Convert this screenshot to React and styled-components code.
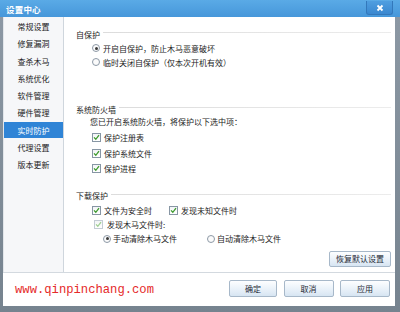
import React from "react"
import styled, { createGlobalStyle } from "styled-components"

const Global = createGlobalStyle`
  html, body {
    margin: 0;
    padding: 0;
    background: #7f8c98;
  }
  body {
    font-family: "Noto Sans CJK SC", "Noto Sans", sans-serif;
    font-size: 8px;
    color: #1c1c1c;
  }
`

const Window = styled.div`
  width: 400px;
  height: 312px;
  display: flex;
  flex-direction: column;
  background: linear-gradient(#8d99a5, #76838f);
`

const TitleBar = styled.div`
  height: 17px;
  flex: none;
  display: flex;
  align-items: flex-start;
  justify-content: space-between;
  background: linear-gradient(#5aaae6, #4697da);
`

const Title = styled.div`
  padding: 3px 0 0 6px;
  color: #fff;
  font-size: 8.5px;
  font-weight: bold;
  line-height: 12px;
  letter-spacing: 0.2px;
`

const Close = styled.div`
  width: 25px;
  height: 13px;
  margin: 1px 7px 0 0;
  display: flex;
  align-items: center;
  justify-content: center;
  background: linear-gradient(#4f9ee0, #3a88d0);
  border: 1px solid #3378bb;
  border-top: none;
  border-radius: 0 0 3px 3px;
`

const Body = styled.div`
  flex: 1;
  margin: 0 5px 6px 3px;
  background: #fff;
  display: flex;
  flex-direction: column;
`

const Main = styled.div`
  height: 255px;
  flex: none;
  display: flex;
  border-bottom: 1px solid #d3d9df;
`

const Sidebar = styled.div`
  width: 59px;
  flex: none;
  padding-top: 1.4px;
  background: #f6f7f9;
  border-right: 1px solid #cfd6dd;
  border-left: 1px solid #e2e6ea;
`

const NavItem = styled.div`
  height: 16.5px;
  margin-bottom: 0.75px;
  display: flex;
  align-items: center;
  justify-content: center;
  color: ${p => (p.$active ? "#fff" : "#222")};
  background: ${p => (p.$active ? "#2f84d6" : "transparent")};
`

const Panel = styled.div`
  flex: 1;
  padding: 11px 4px 0 12px;
  display: flex;
  flex-direction: column;
`

const SectionHead = styled.div`
  height: 12px;
  margin-top: ${p => p.$top || 0}px;
  display: flex;
  align-items: center;
  gap: 3px;
  &::after {
    content: "";
    flex: 1;
    height: 1px;
    margin-top: -3px;
    background: linear-gradient(to right, #dcdcdc, #ececec);
  }
`

const Row = styled.div`
  height: ${p => p.$h || 14}px;
  margin-top: ${p => p.$top || 0}px;
  padding-left: ${p => p.$indent || 16}px;
  display: flex;
  align-items: center;
`

const Item = styled.div`
  width: ${p => (p.$w ? p.$w + "px" : "auto")};
  display: flex;
  align-items: center;
  gap: ${p => p.$gap || 3}px;
`

const Box = styled.span`
  width: 7px;
  height: 7px;
  flex: none;
  display: flex;
  align-items: center;
  justify-content: center;
  border: 1px solid ${p => (p.$dim ? "#c3ccd4" : "#8796a4")};
  background: linear-gradient(#f2f4f6, #fff);
`

const Radio = styled.span`
  width: 6px;
  height: 6px;
  flex: none;
  border-radius: 50%;
  border: 1px solid #8d99a6;
  background: #fbfbfb;
  display: flex;
  align-items: center;
  justify-content: center;
  &::after {
    content: "";
    width: 3px;
    height: 3px;
    border-radius: 50%;
    background: ${p => (p.$on ? "#3a3a3a" : "transparent")};
  }
`

const Button = styled.div`
  width: ${p => p.$w || 48}px;
  height: ${p => p.$h || 17}px;
  display: flex;
  align-items: center;
  justify-content: center;
  box-sizing: border-box;
  border: 1px solid #a7b8c9;
  border-radius: 2px;
  background: linear-gradient(#fdfeff, #e9f1f9 55%, #d7e5f2);
  color: #1e2a36;
`

const Restore = styled.div`
  margin-top: 5px;
  display: flex;
  justify-content: flex-end;
`

const Footer = styled.div`
  flex: 1;
  display: flex;
  align-items: center;
  justify-content: space-between;
  padding: 0 5px 2px 12px;
`

const Watermark = styled.div`
  font-family: "Liberation Mono", monospace;
  font-size: 12.2px;
  color: #e52a2a;
  margin-top: 2px;
`

const Buttons = styled.div`
  display: flex;
  gap: 6.5px;
`

const Check = ({ dim }) => (
  <Box $dim={dim}>
    <svg width="7" height="7" viewBox="0 0 7 7">
      <path d="M1 3.4 L2.8 5.3 L6 1.2" fill="none" stroke={dim ? "#9fcf92" : "#3c9a2c"} strokeWidth="1.3" />
    </svg>
  </Box>
)

const nav = ["常规设置", "修复漏洞", "查杀木马", "系统优化", "软件管理", "硬件管理", "实时防护", "代理设置", "版本更新"]

export default function App() {
  return (
    <>
      <Global />
      <Window>
        <TitleBar>
          <Title>设置中心</Title>
          <Close>
            <svg width="8" height="8" viewBox="0 0 8 8">
              <path d="M1.5 1.5 L6.5 6.5 M6.5 1.5 L1.5 6.5" stroke="#fff" strokeWidth="1.8" />
            </svg>
          </Close>
        </TitleBar>
        <Body>
          <Main>
            <Sidebar>
              {nav.map(n => (
                <NavItem key={n} $active={n === "实时防护"}>{n}</NavItem>
              ))}
            </Sidebar>
            <Panel>
              <SectionHead>自保护</SectionHead>
              <Row $top={1}>
                <Item><Radio $on />开启自保护，防止木马恶意破坏</Item>
              </Row>
              <Row>
                <Item><Radio />临时关闭自保护（仅本次开机有效）</Item>
              </Row>

              <SectionHead $top={34}>系统防火墙</SectionHead>
              <Row $h={12} $indent={14}>您已开启系统防火墙，将保护以下选中项：</Row>
              <Row $h={15.5} $top={3}>
                <Item><Check />保护注册表</Item>
              </Row>
              <Row $h={15.5}>
                <Item><Check />保护系统文件</Item>
              </Row>
              <Row $h={15.5}>
                <Item><Check />保护进程</Item>
              </Row>

              <SectionHead $top={13}>下载保护</SectionHead>
              <Row $top={2}>
                <Item $w={77}><Check />文件为安全时</Item>
                <Item><Check />发现未知文件时</Item>
              </Row>
              <Row $indent={18}>
                <Item $gap={4}><Check dim />发现木马文件时:</Item>
              </Row>
              <Row $indent={27}>
                <Item $w={104} $gap={2}><Radio $on />手动清除木马文件</Item>
                <Item $gap={2}><Radio />自动清除木马文件</Item>
              </Row>
              <Restore>
                <Button $w={62} $h={16}>恢复默认设置</Button>
              </Restore>
            </Panel>
          </Main>
          <Footer>
            <Watermark>www.qinpinchang.com</Watermark>
            <Buttons>
              <Button>确定</Button>
              <Button $w={50}>取消</Button>
              <Button $w={50}>应用</Button>
            </Buttons>
          </Footer>
        </Body>
      </Window>
    </>
  )
}
